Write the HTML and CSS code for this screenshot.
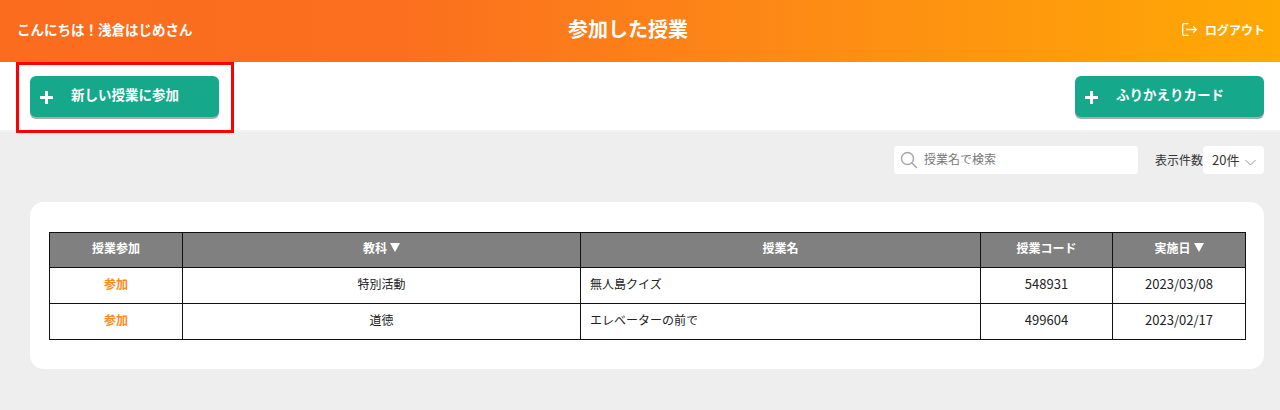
FILE: index.html
```html
<!DOCTYPE html>
<html lang="ja">
<head>
<meta charset="utf-8">
<title>参加した授業</title>
<link rel="stylesheet" href="styles.css">
</head>
<body>
<header class="header">
  <div class="greeting">こんにちは！浅倉はじめさん</div>
  <h1 class="title">参加した授業</h1>
  <a class="logout">
    <svg class="logout-icon" width="15" height="13" viewBox="0 0 15 13" fill="none" stroke="#fff" stroke-width="1.3">
      <path d="M6.5 .7H2Q.7 .7 .7 2V11Q.7 12.3 2 12.3H6.5"/>
      <path d="M4 6.5H14.3M11.2 3.4L14.3 6.5L11.2 9.6"/>
    </svg>
    <span>ログアウト</span>
  </a>
</header>
<section class="actions">
  <button class="action-btn"><span class="plus"></span><span>新しい授業に参加</span></button>
  <button class="action-btn"><span class="plus"></span><span>ふりかえりカード</span></button>
  <div class="highlight"></div>
</section>
<main class="main">
  <div class="filters">
    <div class="search">
      <svg width="18" height="18" viewBox="0 0 18 18" fill="none" stroke="#a8a8a8" stroke-width="1.5">
        <circle cx="7.5" cy="7.5" r="6"/>
        <path d="M12 12L17 17"/>
      </svg>
      <span>授業名で検索</span>
    </div>
    <div class="count">
      <span class="count-label">表示件数</span>
      <div class="select">
        <span>20件</span>
        <svg width="11" height="7" viewBox="0 0 11 7" fill="none" stroke="#999" stroke-width="1"><path d="M.5 1L5.5 6L10.5 1"/></svg>
      </div>
    </div>
  </div>
  <div class="card">
    <table class="table">
      <colgroup>
        <col class="c1"><col class="c2"><col class="c3"><col class="c4"><col class="c5">
      </colgroup>
      <thead>
        <tr>
          <th>授業参加</th>
          <th>教科<span class="sort"></span></th>
          <th>授業名</th>
          <th>授業コード</th>
          <th>実施日<span class="sort"></span></th>
        </tr>
      </thead>
      <tbody>
        <tr>
          <td class="join">参加</td>
          <td>特別活動</td>
          <td class="name">無人島クイズ</td>
          <td class="num">548931</td>
          <td class="num">2023/03/08</td>
        </tr>
        <tr>
          <td class="join">参加</td>
          <td>道徳</td>
          <td class="name">エレベーターの前で</td>
          <td class="num">499604</td>
          <td class="num">2023/02/17</td>
        </tr>
      </tbody>
    </table>
  </div>
</main>
</body>
</html>
```
FILE: styles.css
```css
* { box-sizing: border-box; }
html, body { margin: 0; padding: 0; }
body {
  width: 1280px;
  height: 410px;
  overflow: hidden;
  background: #eeeeee;
  font-family: "Noto Sans CJK JP", "Noto Sans", sans-serif;
  color: #222;
}
.header {
  height: 62px;
  display: flex;
  align-items: center;
  justify-content: space-between;
  padding: 0 16px 4px 17px;
  color: #fff;
  background: linear-gradient(90deg, #fb6c1f 0%, #fb6f1e 31%, #fd8a15 62%, #ffa904 100%);
  position: relative;
}
.greeting { font-size: 13.5px; font-weight: 700; line-height: 20px; }
.title {
  position: absolute;
  left: 568px;
  top: 16px;
  margin: 0;
  font-size: 20px;
  font-weight: 700;
  line-height: 26px;
  pointer-events: none;
}
.logout { display: flex; align-items: center; gap: 8px; font-size: 12px; font-weight: 700; margin-right: -1px; }
.logout-icon { display: block; }
.actions {
  height: 68px;
  background: #fff;
  box-shadow: 0 2px 0 #f3f3f3;
  display: flex;
  justify-content: space-between;
  padding: 14px 16px 0 30px;
  position: relative;
}
.action-btn {
  width: 189px;
  height: 41px;
  border: 0;
  border-radius: 6px;
  background: #15a88b;
  box-shadow: 0 2px 0 #aaa;
  color: #fff;
  display: flex;
  align-items: center;
  padding: 0 0 5px 10px;
  font: 700 13.5px/18px "Noto Sans CJK JP", sans-serif;
  gap: 18px;
}
.plus {
  width: 13px;
  height: 13px;
  margin-top: 6px;
  background:
    linear-gradient(#fff, #fff) center / 13px 3px no-repeat,
    linear-gradient(#fff, #fff) center / 3px 13px no-repeat;
}
.highlight {
  position: absolute;
  left: 16px;
  top: 0;
  width: 218px;
  height: 71px;
  border: 3px solid #f00;
  pointer-events: none;
}
.main { padding: 16px 16px 0 30px; }
.filters {
  height: 28px;
  display: flex;
  justify-content: flex-end;
  align-items: center;
  gap: 17px;
}
.search {
  width: 244px;
  height: 28px;
  background: #fff;
  border-radius: 4px;
  display: flex;
  align-items: center;
  gap: 6px;
  padding: 0 0 0 6px;
  font-size: 12px;
  line-height: 16px;
  color: #777;
}
.search span { margin-top: -2px; }
.search svg { display: block; }
.count { display: flex; align-items: center; font-size: 12px; }
.count-label { color: #333; width: 48px; white-space: nowrap; margin-top: -2px; }
.select {
  width: 61px;
  height: 28px;
  background: #fff;
  border-radius: 4px;
  display: flex;
  align-items: center;
  padding-left: 9px;
  gap: 6px;
  font-size: 13px;
  color: #333;
}
.select span { margin-top: -2px; }
.select svg { margin-top: 4px; }
.card {
  margin-top: 28px;
  height: 167px;
  background: #fff;
  border-radius: 14px;
  padding: 30px 0 0 19px;
}
.table {
  width: 1197px;
  border-collapse: separate;
  border-spacing: 0;
  table-layout: fixed;
  font-size: 12px;
  border-top: 1px solid #111;
  border-left: 1px solid #111;
}
.c1 { width: 133px; }
.c2 { width: 398px; }
.c3 { width: 400px; }
.c4 { width: 132px; }
.c5 { width: 133px; }
.table th, .table td {
  height: 36px;
  padding: 0 0 4px;
  text-align: center;
  border-right: 1px solid #111;
  border-bottom: 1px solid #111;
  line-height: 18px;
}
.table th {
  height: 35px;
  background: #808080;
  color: #fff;
  font-size: 12px;
  font-weight: 700;
}
.table td { background: #fff; color: #222; }
.table td.name { text-align: left; padding-left: 9px; }
.table td.num { font-size: 13px; }
.table td.join { color: #ff8a1a; font-weight: 700; font-size: 12px; }
.sort {
  display: inline-block;
  margin-left: 3px;
  border-left: 5.5px solid transparent;
  border-right: 5.5px solid transparent;
  border-top: 9px solid #fff;
  vertical-align: 1px;
}
```
